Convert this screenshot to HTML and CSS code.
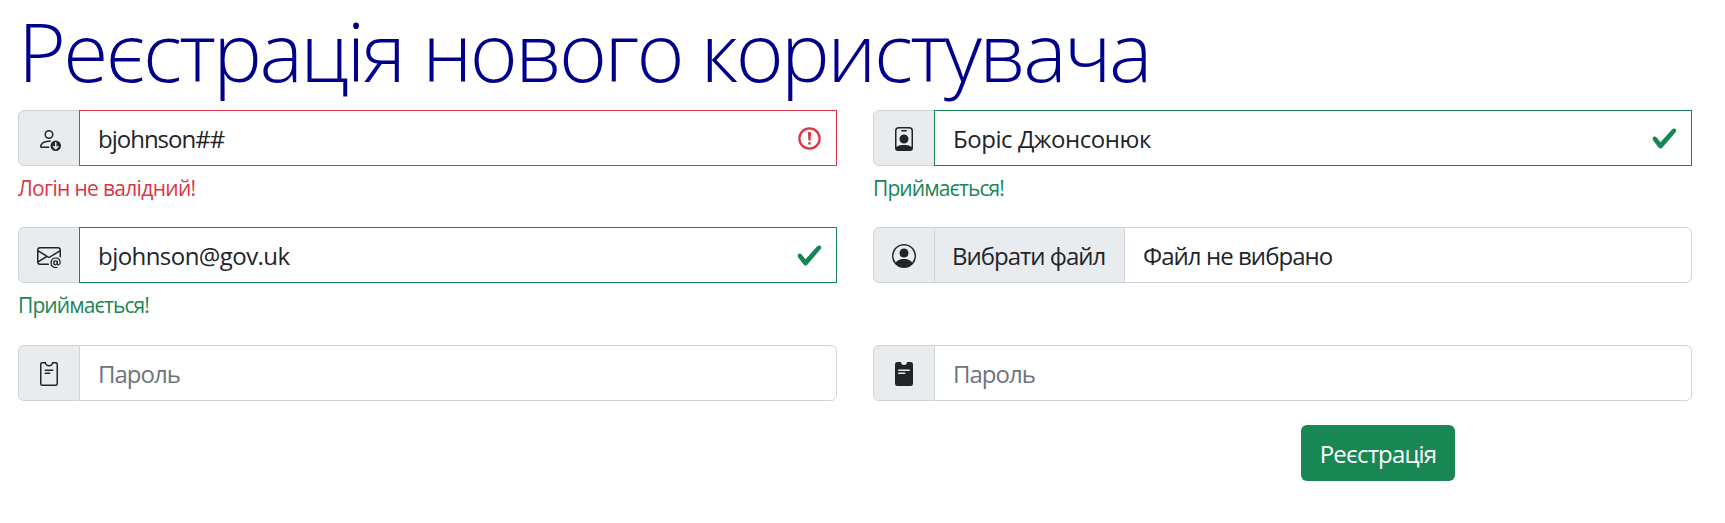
FILE: index.html
```html
<!DOCTYPE html>
<html lang="uk">
<head>
<meta charset="utf-8">
<title>Реєстрація</title>
<link rel="stylesheet" href="styles.css">
</head>
<body>
<main class="container">
<h1 class="title">Реєстрація нового користувача</h1>
<form class="form">
  <div class="field">
    <div class="group">
      <span class="addon"><svg class="icon" viewBox="0 0 16 16"><path d="M12.5 9a3.5 3.5 0 1 1 0 7 3.5 3.5 0 0 1 0-7Zm.354 5.854 1.5-1.5a.5.5 0 0 0-.708-.708l-.646.647V10.5a.5.5 0 0 0-1 0v2.793l-.646-.647a.5.5 0 0 0-.708.708l1.5 1.5a.5.5 0 0 0 .708 0ZM11 5a3 3 0 1 1-6 0 3 3 0 0 1 6 0ZM8 7a2 2 0 1 0 0-4 2 2 0 0 0 0 4Z"/><path d="M8.256 14a4.474 4.474 0 0 1-.229-1.004H3c.001-.246.154-.986.832-1.664C4.484 10.68 5.711 10 8 10c.26 0 .507.009.74.025.226-.341.496-.65.804-.918C9.077 9.038 8.564 9 8 9c-5 0-6 3-6 4s1 1 1 1h5.256Z"/></svg></span>
      <div class="control invalid"><input class="input login" type="text" value="bjohnson##"><svg class="mark" viewBox="0 0 12 12" fill="none" stroke="#dc3545"><circle cx="6" cy="6" r="4.5"/><path stroke-linejoin="round" d="M5.8 3.6h.4L6 6.5z"/><circle cx="6" cy="8.2" r=".6" fill="#dc3545" stroke="none"/></svg></div>
    </div>
    <div class="feedback error">Логін не валідний!</div>
  </div>
  <div class="field">
    <div class="group">
      <span class="addon"><svg class="icon" viewBox="0 0 16 16"><path d="M6.5 2a.5.5 0 0 0 0 1h3a.5.5 0 0 0 0-1h-3zM11 8a3 3 0 1 1-6 0 3 3 0 0 1 6 0z"/><path d="M4.5 0A2.5 2.5 0 0 0 2 2.5V14a2 2 0 0 0 2 2h8a2 2 0 0 0 2-2V2.5A2.5 2.5 0 0 0 11.5 0h-7zM3 2.5A1.5 1.5 0 0 1 4.5 1h7A1.5 1.5 0 0 1 13 2.5v10.795a4.2 4.2 0 0 0-.776-.492C11.392 12.387 10.063 12 8 12s-3.392.387-4.224.803a4.2 4.2 0 0 0-.776.492V2.5z"/></svg></span>
      <div class="control valid"><input class="input name" type="text" value="Боріс Джонсонюк"><svg class="mark" viewBox="0 0 8 8"><path fill="#198754" d="M2.3 6.73.6 4.53c-.4-1.04.46-1.4 1.1-.8l1.1 1.4 3.4-3.8c.6-.63 1.6-.27 1.2.7l-4 4.6c-.43.5-.8.4-1.1.1z"/></svg></div>
    </div>
    <div class="feedback ok">Приймається!</div>
  </div>
  <div class="field">
    <div class="group">
      <span class="addon"><svg class="icon" viewBox="0 0 16 16"><path d="M2 2a2 2 0 0 0-2 2v8.01A2 2 0 0 0 2 14h5.5a.5.5 0 0 0 0-1H2a1 1 0 0 1-.966-.741l5.64-3.471L8 9.583l7-4.2V8.5a.5.5 0 0 0 1 0V4a2 2 0 0 0-2-2H2Zm3.708 6.208L1 11.105V5.383l4.708 2.825ZM1 4.217V4a1 1 0 0 1 1-1h12a1 1 0 0 1 1 1v.217l-7 4.2-7-4.2Z"/><path d="M14.247 14.269c1.01 0 1.587-.857 1.587-2.025v-.21C15.834 10.43 14.64 9 12.52 9h-.035C10.42 9 9 10.36 9 12.432v.214C9 14.82 10.438 16 12.358 16h.044c.594 0 1.018-.074 1.237-.175v-.73c-.245.11-.673.18-1.18.18h-.044c-1.334 0-2.571-.788-2.571-2.655v-.157c0-1.657 1.058-2.724 2.64-2.724h.04c1.535 0 2.484 1.05 2.484 2.326v.118c0 .975-.324 1.39-.639 1.39-.232 0-.41-.148-.41-.42v-2.19h-.906v.569h-.03c-.084-.298-.368-.63-.954-.63-.778 0-1.259.555-1.259 1.4v.528c0 .892.49 1.434 1.26 1.434.471 0 .896-.227 1.014-.643h.043c.118.42.617.648 1.12.648Zm-2.453-1.588v-.227c0-.546.227-.791.573-.791.297 0 .572.192.572.708v.367c0 .573-.253.744-.564.744-.354 0-.581-.215-.581-.8Z"/></svg></span>
      <div class="control valid"><input class="input email" type="text" value="bjohnson@gov.uk"><svg class="mark" viewBox="0 0 8 8"><path fill="#198754" d="M2.3 6.73.6 4.53c-.4-1.04.46-1.4 1.1-.8l1.1 1.4 3.4-3.8c.6-.63 1.6-.27 1.2.7l-4 4.6c-.43.5-.8.4-1.1.1z"/></svg></div>
    </div>
    <div class="feedback ok">Приймається!</div>
  </div>
  <div class="field">
    <div class="group">
      <span class="addon"><svg class="icon" viewBox="0 0 16 16"><path d="M11 6a3 3 0 1 1-6 0 3 3 0 0 1 6 0z"/><path fill-rule="evenodd" d="M0 8a8 8 0 1 1 16 0A8 8 0 0 1 0 8zm8-7a7 7 0 0 0-5.468 11.37C3.242 11.226 4.805 10 8 10s4.757 1.225 5.468 2.37A7 7 0 0 0 8 1z"/></svg></span>
      <label class="control file"><span class="file-button">Вибрати файл</span><span class="file-name">Файл не вибрано</span></label>
    </div>
  </div>
  <div class="field">
    <div class="group">
      <span class="addon"><svg class="icon" viewBox="0 0 16 16"><path d="M5.5 5a.5.5 0 0 0 0 1h5a.5.5 0 0 0 0-1h-5Zm0 2a.5.5 0 0 0 0 1h3a.5.5 0 0 0 0-1h-3Z"/><path d="M8 2a2 2 0 0 0 2-2h2.5A1.5 1.5 0 0 1 14 1.5v13a1.5 1.5 0 0 1-1.5 1.5h-9A1.5 1.5 0 0 1 2 14.5v-13A1.5 1.5 0 0 1 3.5 0H6a2 2 0 0 0 2 2Zm0 1a3.001 3.001 0 0 1-2.83-2H3.5a.5.5 0 0 0-.5.5v13a.5.5 0 0 0 .5.5h9a.5.5 0 0 0 .5-.5v-13a.5.5 0 0 0-.5-.5h-1.67A3.001 3.001 0 0 1 8 3Z"/></svg></span>
      <div class="control"><input class="input password" type="password" placeholder="Пароль"></div>
    </div>
  </div>
  <div class="field">
    <div class="group">
      <span class="addon"><svg class="icon" viewBox="0 0 16 16"><path fill-rule="evenodd" d="M10 0a2 2 0 1 1-4 0H3.5A1.5 1.5 0 0 0 2 1.5v13A1.5 1.5 0 0 0 3.5 16h9a1.5 1.5 0 0 0 1.5-1.5v-13A1.5 1.5 0 0 0 12.5 0H10ZM4.5 5h7a.5.5 0 0 1 0 1h-7a.5.5 0 0 1 0-1Zm0 2h4a.5.5 0 0 1 0 1h-4a.5.5 0 0 1 0-1Z"/></svg></span>
      <div class="control"><input class="input password" type="password" placeholder="Пароль"></div>
    </div>
  </div>
  <div class="actions"><button class="submit" type="button">Реєстрація</button></div>
</form>
</main>
</body>
</html>
```
FILE: styles.css
```css
* { box-sizing: border-box; }
body {
  margin: 0;
  background: #fff;
  color: #212529;
  font-family: "Segoe UI", "Open Sans", "Noto Sans", sans-serif;
  font-size: 24px;
  line-height: 36px;
}
.container { width: 1710px; padding: 0 18px; }
.title {
  margin: 0;
  height: 110px;
  color: #00008b;
  font-size: 82px;
  font-weight: 300;
  line-height: 100px;
  white-space: nowrap;
  letter-spacing: -2.6px;
}
.form {
  display: grid;
  grid-template-columns: 819px 819px;
  grid-template-rows: 117px 118px 80px 56px;
  column-gap: 36px;
}
.group { display: flex; height: 56px; }
.addon {
  display: flex;
  align-items: center;
  justify-content: center;
  width: 62px;
  flex: none;
  padding-top: 2px;
  background: #e9ecef;
  border: 1px solid #ced4da;
  border-radius: 6px 0 0 6px;
}
.icon { width: 24px; height: 24px; fill: #212529; }
.control {
  display: flex;
  align-items: center;
  flex: 1;
  margin-left: -1px;
  border: 1px solid #ced4da;
  border-radius: 0 6px 6px 0;
  background: #fff;
}
.valid { border-color: #198754; border-radius: 0; padding-right: 13px; }
.invalid { border-color: #dc3545; border-radius: 0; padding-right: 13px; }
.mark { width: 27px; height: 27px; flex: none; }
.input {
  flex: 1;
  min-width: 0;
  height: 54px;
  padding: 0 18px;
  border: 0;
  outline: 0;
  background: none;
  color: #212529;
  font: inherit;
}
.input::placeholder { color: #6c757d; opacity: 1; }
.login { letter-spacing: -1px; }
.name { letter-spacing: -0.45px; }
.email { letter-spacing: -0.55px; }
.password { letter-spacing: -1px; }
.file-button {
  padding: 10px 17px 8px;
  height: 54px;
  background: #e9ecef;
  border-right: 1px solid #ced4da;
  width: 190px;
  white-space: nowrap;
  letter-spacing: -1px;
}
.file-name { padding: 2px 18px 0; letter-spacing: -0.95px; }
.feedback {
  margin-top: 6px;
  font-size: 21px;
  line-height: 32px;
}
.error { color: #dc3545; letter-spacing: -0.68px; }
.ok { color: #198754; letter-spacing: -0.9px; }
.actions { grid-column: 2; display: flex; padding-left: 428px; }
.submit {
  width: 154px;
  height: 56px;
  padding: 2px 0 0;
  border: 0;
  border-radius: 6px;
  background: #198754;
  color: #fff;
  font: inherit;
  letter-spacing: -0.85px;
}
```
